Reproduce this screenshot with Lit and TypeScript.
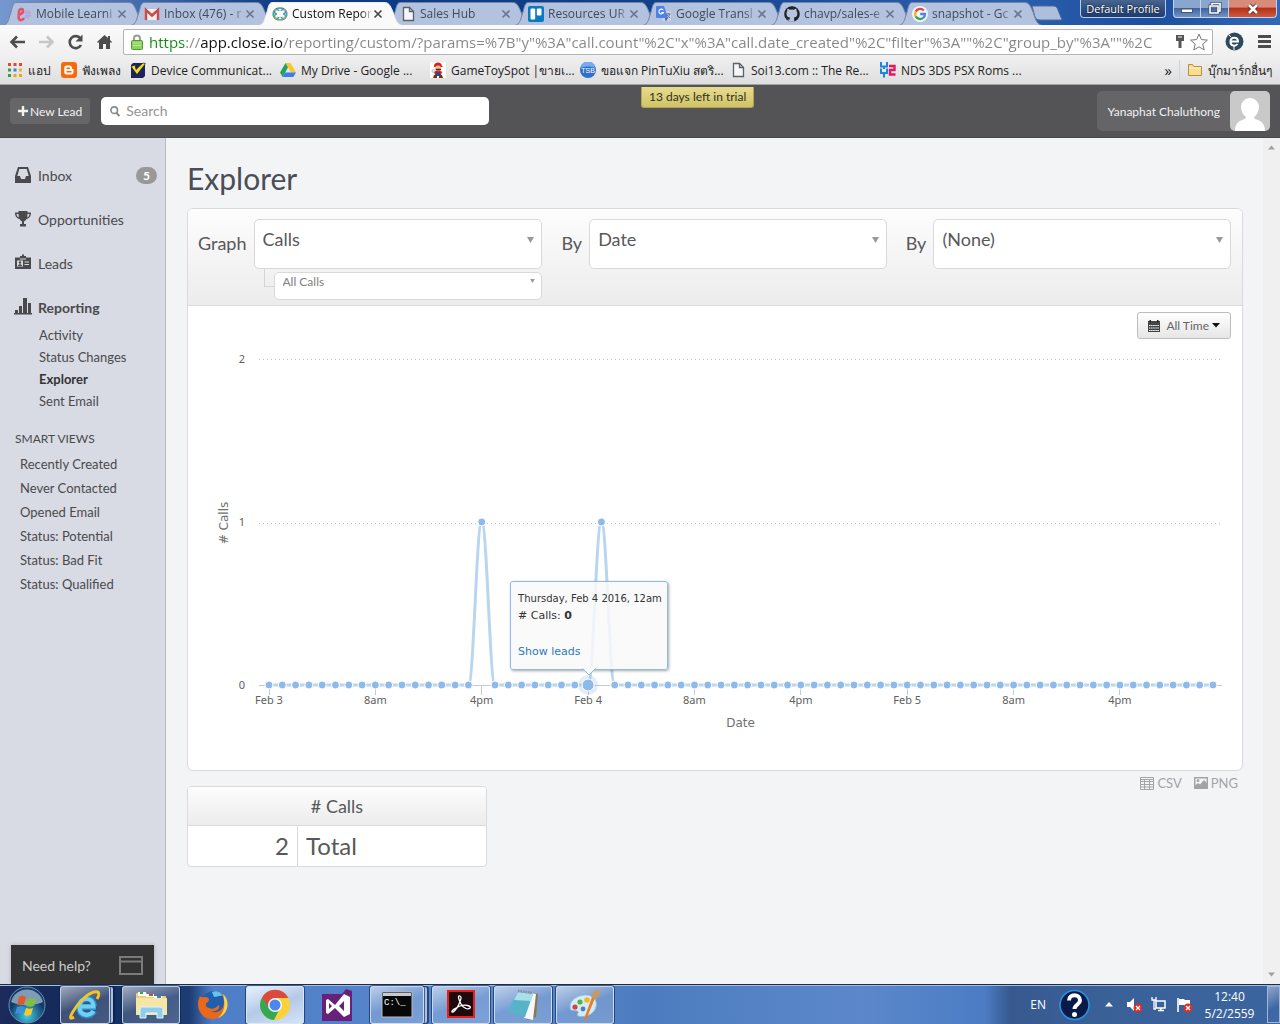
import { LitElement, html, svg, css, nothing } from "lit";
import { customElement, property, state } from "lit/decorators.js";
import { classMap } from "lit/directives/class-map.js";

const pageIcon = svg`<path d="M3.5 1.5h6l4 4v9h-10z" fill="#f4f6fa" stroke="#5a5f68" stroke-width="1.3"/><path d="M9.5 1.5v4h4" fill="none" stroke="#5a5f68" stroke-width="1.3"/>`;

const tabIcons: Record<string, unknown> = {
  learn: svg`<path d="M2 8.500c3 0 5-1.500 5-4S3 2.500 3 6c0 3-1 5 0 7s4 1 5-1" fill="none" stroke="#e2546c" stroke-width="2.600"/><path d="M8.500 7c1-3 6-2 5.500 0H9m0 2.500h5c-1 2-4 2.500-5.500 1" fill="none" stroke="#b9a3dc" stroke-width="1.500"/>`,
  gmail: svg`<rect x="1" y="3" width="14" height="11" fill="#eceef2"/><path d="M2 14V4l6 5.500 6-5.500v10" fill="none" stroke="#c94a46" stroke-width="2.400"/>`,
  close: svg`<g fill="none" stroke-width="1.600"><ellipse cx="8" cy="5.500" rx="5.500" ry="3.500" stroke="#3f88bd"/><ellipse cx="8" cy="10.500" rx="5.500" ry="3.500" stroke="#58ab76"/><ellipse cx="4.500" cy="8" rx="3.300" ry="4.500" stroke="#3da3a7"/><ellipse cx="11.500" cy="8" rx="3.300" ry="4.500" stroke="#4f9fca"/></g><circle cx="8" cy="8" r="3.200" fill="#fff"/><g fill="#d8a33e"><circle cx="3.500" cy="3.800" r="1.100"/><circle cx="12.500" cy="3.800" r="1.100"/><circle cx="3.500" cy="12.200" r="1.100"/><circle cx="12.500" cy="12.200" r="1.100"/></g>`,
  page: pageIcon,
  trello: svg`<rect width="16" height="16" rx="2" fill="#0b79bf"/><rect x="2.500" y="2.500" width="4.700" height="11" rx="1" fill="#fff"/><rect x="8.800" y="2.500" width="4.700" height="7" rx="1" fill="#fff"/>`,
  translate: svg`<rect x="6" y="5" width="9" height="10.500" rx="1" fill="#c9d0de"/><path d="M1 0h7l4 12H1a1 1 0 0 1-1-1V1a1 1 0 0 1 1-1z" fill="#4c82e6"/><path d="M7.300 4.200a2.400 2.400 0 1 0 .2 2.300H5.300" fill="none" stroke="#fff" stroke-width="1.100"/><path d="M9 12h3l-2.300 3.500z" fill="#3a61b8"/><path d="M10 8h4.500M12.200 7v1m1.500 0c-.5 2-1.500 3-2.700 4m0-3 3 3" stroke="#69758e" fill="none"/>`,
  github: svg`<circle cx="8" cy="8" r="7.800" fill="#1d222b"/><path d="M5.800 15.700v-2.100c-2.700.4-2.700-1.500-3.700-1.700M10.200 15.700v-2.600c0-.8-.2-1.200-.6-1.500 2-.3 3.700-1.100 3.700-4.200 0-.9-.3-1.700-.9-2.300.1-.3.400-1.200-.1-2.300 0 0-.8-.2-2.400.9a8 8 0 0 0-4 0C4.300 2.600 3.500 2.800 3.500 2.800c-.5 1.100-.2 2-.1 2.300-.6.600-.9 1.400-.9 2.300 0 3.100 1.700 3.900 3.700 4.200-.3.300-.5.700-.5 1.300v2.800z" fill="#b6c4dd"/>`,
  google: svg`<circle cx="8" cy="8" r="8" fill="#f2f5fa"/><g fill="none" stroke-width="2.300"><path d="M11.800 4.500A5 5 0 0 0 3.700 5.600" stroke="#e2493b"/><path d="M3.700 5.600a5 5 0 0 0 0 4.800" stroke="#f4b713"/><path d="M3.700 10.400a5 5 0 0 0 7.500 1.500" stroke="#36a457"/><path d="M11.200 11.900A5 5 0 0 0 13 8H8.200" stroke="#4a83ea"/></g>`,
};

const bookmarkIcons: Record<string, unknown> = {
  apps: svg`<g><path d="M1 1h3v3H1zM6.500 1h3v3h-3zM12 1h3v3h-3z" fill="#e8443a"/><path d="M1 6.500h3v3H1z" fill="#35a14f"/><path d="M6.500 6.500h3v3h-3z" fill="#3f7de0"/><path d="M12 6.500h3v3h-3z" fill="#f0b51e"/><path d="M1 12h3v3H1z" fill="#35a14f"/><path d="M6.500 12h3v3h-3zM12 12h3v3h-3z" fill="#f0a51e"/></g>`,
  blogger: svg`<rect width="16" height="16" rx="3" fill="#f66a0a"/><path d="M5.500 3.500h3a2.300 2.300 0 0 1 2.300 2.300c0 1 .3 1.200 1.700 1.400v2.800a2.500 2.500 0 0 1-2.500 2.500H5.800a2.500 2.500 0 0 1-2.500-2.500V5.800a2.300 2.300 0 0 1 2.200-2.300z" fill="#fff"/><path d="M6 6.300h2.500M6 9.700h4" stroke="#f66a0a" stroke-width="1.400" stroke-linecap="round"/>`,
  device: svg`<path d="M1 3l2-2h12v13l-2 2H1z" fill="#20215f"/><path d="M1 4.500l4-1.500 1 4.500L13 1l2.500.5L7 12.500z" fill="#f2e21b" stroke="#1a1a40" stroke-width=".6"/>`,
  drive: svg`<path d="M5.500 1h5L16 10.500h-5z" fill="#fbc62d"/><path d="M5.500 1L0 10.500 2.600 15 8 5.400z" fill="#1fa463"/><path d="M5.300 10.500H16L13.400 15H2.600z" fill="#3d7de6"/>`,
  mario: svg`<rect width="16" height="16" fill="#fff"/><path d="M4 4c0-4 7-5 8 0l1 1H4z" fill="#d9201e"/><circle cx="8" cy="6.500" r="3" fill="#f3bd8e"/><path d="M6 7.500h5" stroke="#4c2410" stroke-width="1.400"/><path d="M4 10c2-2 6-2 8 0l-1 3H5z" fill="#d9201e"/><path d="M6 10h4v4H6z" fill="#27469c"/><path d="M4 13h3v3H3zM9 13h3l1 3H9z" fill="#6b3517"/><circle cx="3.500" cy="9" r="1.500" fill="#e9e9e9" stroke="#888" stroke-width=".4"/>`,
  tsb: svg`<circle cx="8" cy="8" r="8" fill="#2d6fca"/><path d="M1 6a7 7 0 0 1 14 0c-4-2-10-2-14 0z" fill="#76abee"/><text x="8" y="11" text-anchor="middle" font-family="Liberation Sans, sans-serif" font-size="7" fill="#fff">TSB</text>`,
  page: pageIcon,
  h2: svg`<path d="M1 0v4.500h6V0M4 4.500V7M1 6.500V11h6V6.500M4 11v4.500" fill="none" stroke="#1d86dd" stroke-width="2"/><path d="M9 4h5.500v4H10v4.500h5.500" fill="none" stroke="#e01767" stroke-width="2.400"/>`,
};

interface TabInfo { title: string; icon: string; active?: boolean; }

const TABS: TabInfo[] = [
  { title: "Mobile Learni", icon: "learn" },
  { title: "Inbox (476) - r", icon: "gmail" },
  { title: "Custom Repor", icon: "close", active: true },
  { title: "Sales Hub", icon: "page" },
  { title: "Resources UR", icon: "trello" },
  { title: "Google Transl", icon: "translate" },
  { title: "chavp/sales-e", icon: "github" },
  { title: "snapshot - Gc", icon: "google" },
];

const BOOKMARKS = [
  { title: "แอป", icon: "apps", size: "tiny" },
  { title: "ฟังเพลง", icon: "blogger", size: "small" },
  { title: "Device Communicat...", icon: "device", size: "" },
  { title: "My Drive - Google ...", icon: "drive", size: "" },
  { title: "GameToySpot |ขายเ...", icon: "mario", size: "" },
  { title: "ขอแจก PinTuXiu สตริ...", icon: "tsb", size: "" },
  { title: "Soi13.com :: The Re...", icon: "page", size: "" },
  { title: "NDS 3DS PSX Roms ...", icon: "h2", size: "" },
];

@customElement("browser-frame")
export class BrowserFrame extends LitElement {
  static styles = css`
    :host { display: block; font-family: "Open Sans", "Noto Sans", sans-serif; font-size: 12px; color: #222; }
    button { font: inherit; color: inherit; border: 0; padding: 0; background: none; }
    svg { display: block; flex: none; }
    .strip { display: flex; height: 25px; padding-left: 2px; background: linear-gradient(90deg, #7598cf 0, #476fb2 10%, #0d3a82 22%, #123f8a 50%, #2c61af 78%, #1c4f9e 90%, #3169b8 100%); }
    .tab { position: relative; flex: 0 1 128px; min-width: 0; height: 25px; display: flex; align-items: center; box-sizing: border-box; padding: 2px 3px 0 14px; color: #3f4a5c; }
    .shape { position: absolute; left: 1px; top: 0; width: 143px; height: 25px; }
    .shape path { fill: #b3c2de; stroke: #7286ab; }
    .tab.active { z-index: 1; color: #111; }
    .tab.active .shape path { fill: #fafafa; stroke: #e8ecf4; }
    .tab .icon, .tab button { position: relative; }
    .name { flex: 1; min-width: 0; margin-left: 4px; overflow: hidden; white-space: nowrap; text-align: left; -webkit-mask-image: linear-gradient(90deg, #000 85%, transparent); mask-image: linear-gradient(90deg, #000 85%, transparent); }
    .newtab { margin: 5px 0 0 5px; align-self: flex-start; }
    .caption { margin-left: auto; display: flex; align-items: flex-start; padding-right: 3px; color: #fff; }
    .profile { height: 18px; width: 86px; margin-right: 7px; border: 1px solid #b9cbea; border-top: 0; border-radius: 0 0 4px 4px; background: linear-gradient(#47658f, #1d3c72); font-size: 11px; line-height: 16px; text-shadow: 0 0 2px #000; white-space: nowrap; }
    .win { height: 18px; width: 28px; display: grid; place-items: center; border: 1px solid #c3d2ea; border-top: 0; background: linear-gradient(#8aa6cf 45%, #41669f 50%, #6d93c8); }
    .win + .win { border-left: 0; }
    .min { border-bottom-left-radius: 4px; }
    .shut { width: 48px; border-bottom-right-radius: 4px; background: linear-gradient(#d98b79 40%, #b6311d 50%, #cf5a3f); }
    .bar { display: flex; align-items: center; height: 33px; background: linear-gradient(#fafafa, #efefef); padding: 0 8px 0 9px; gap: 12px; }
    .nav { display: flex; gap: 12px; }
    .omni { flex: 1; min-width: 0; height: 26px; box-sizing: border-box; display: flex; align-items: center; gap: 5px; margin-left: -2px; padding: 0 4px 0 6px; background: #fff; border: 1px solid #b4b4b4; border-radius: 2px; }
    .url { flex: 1; min-width: 0; border: 0; outline: 0; padding: 0; height: 24px; font: 15px "Open Sans", "Noto Sans", sans-serif; color: transparent; background: linear-gradient(90deg, #128a12 37px, #8a8a8a 37px 52px, #111 52px 134px, #868686 134px); -webkit-background-clip: text; background-clip: text; }
    .marks { display: flex; align-items: center; height: 24px; padding: 0 8px 2px 7px; background: linear-gradient(#efefef, #dedede); border-bottom: 1px solid #a3a3a3; }
    .mark { width: 150px; flex: 0 1 auto; min-width: 0; box-sizing: border-box; display: flex; align-items: center; gap: 5px; color: #222; text-decoration: none; white-space: nowrap; }
    .mark.tiny { width: 54px; }
    .mark.small { width: 69px; }
    .more { margin-left: auto; font-size: 15px; line-height: 16px; }
    .rule { width: 1px; height: 20px; background: #c9d4e4; margin: 0 7px; }
    .mark.folder { width: auto; flex: none; }
  `;

  render() {
    return html`
      <div class="strip">
        ${TABS.map((t) => html`
          <div class=${classMap({ tab: true, active: !!t.active })}>
            <svg class="shape" viewBox="0 0 143 25"><path d="M0 25.500C5 24 5 21 8 12C10 5 10 2.500 14 2.500H125C130 2.500 131 5 134 12C137 21 138 24 143 25.500"/></svg>
            <svg class="icon" width="16" height="16" viewBox="0 0 16 16">${tabIcons[t.icon]}</svg>
            <button class="name">${t.title}</button>
            <button aria-label="Close tab"><svg width="10" height="10" viewBox="0 0 10 10"><path d="M1.500 1.500l7 7m0-7l-7 7" stroke=${t.active ? "#444" : "#68758c"} stroke-width="1.600"/></svg></button>
          </div>`)}
        <button class="newtab" aria-label="New tab"><svg width="32" height="16" viewBox="0 0 32 16"><path d="M1 1h21c3 0 4 1 5 4l4 10H9c-3 0-4-1-5-3z" fill="#aebfdc" stroke="#4f6b9d"/></svg></button>
        <div class="caption">
          <button class="profile">Default Profile</button>
          <button class="win min" aria-label="Minimize"><svg width="14" height="10" viewBox="0 0 14 10"><rect x="1.500" y="5" width="11" height="3.500" fill="#fff" stroke="#47556d"/></svg></button>
          <button class="win" aria-label="Restore"><svg width="14" height="13" viewBox="0 0 14 13"><path d="M4 3V1.500h8V9h-2M2 4h8v7H2z" fill="none" stroke="#3c4a64" stroke-width="3"/><path d="M4 3V1.500h8V9h-2M2 4h8v7H2z" fill="none" stroke="#fff" stroke-width="1.600"/></svg></button>
          <button class="win shut" aria-label="Close"><svg width="14" height="12" viewBox="0 0 14 12"><path d="M3 2l8 8m0-8l-8 8" stroke="#5f2a22" stroke-width="4.400"/><path d="M3 2l8 8m0-8l-8 8" stroke="#fff" stroke-width="2.600"/></svg></button>
        </div>
      </div>
      <div class="bar">
        <div class="nav">
          <button aria-label="Back"><svg width="17" height="18" viewBox="0 0 17 18"><path d="M16 9H3M8 3.500L2.500 9 8 14.500" fill="none" stroke="#4d4d4d" stroke-width="2.600"/></svg></button>
          <button aria-label="Forward"><svg width="17" height="18" viewBox="0 0 17 18"><path d="M1 9h13M9 3.500L14.500 9 9 14.500" fill="none" stroke="#c6c6c6" stroke-width="2.600"/></svg></button>
          <button aria-label="Reload"><svg width="17" height="18" viewBox="0 0 17 18"><path d="M13.500 5.500A6 6 0 1 0 14 12" fill="none" stroke="#4d4d4d" stroke-width="2.600"/><path d="M15.500 1.500v7h-7z" fill="#4d4d4d"/></svg></button>
          <button aria-label="Home"><svg width="17" height="18" viewBox="0 0 17 18"><path d="M8.500 2L1 9l1 1 1-1v7h4v-5h3v5h4V9l1 1 1-1-2-2V3h-2v2z" fill="#4d4d4d"/></svg></button>
        </div>
        <div class="omni">
          <svg width="14" height="18" viewBox="0 0 14 18"><path d="M4 8V5.500a3 3 0 0 1 6 0V8" fill="none" stroke="#9b9b9b" stroke-width="2"/><rect x="1.500" y="7.500" width="11" height="9" rx="1" fill="#8ed35f" stroke="#4f9a35"/><path d="M3 10h8M3 12.500h8" stroke="#b8eb95"/></svg>
          <input class="url" aria-label="Address" .value=${'https://app.close.io/reporting/custom/?params=%7B"y"%3A"call.count"%2C"x"%3A"call.date_created"%2C"filter"%3A""%2C"group_by"%3A""%2C'}>
          <svg width="10" height="16" viewBox="0 0 10 16"><path d="M1 1h8v6H6.500v7h-3V7H1z" fill="#555"/><path d="M3 3h4" stroke="#fff"/></svg>
          <svg width="18" height="18" viewBox="0 0 18 18"><path d="M9 1l2.400 5.600 6 .5-4.600 4 1.400 5.900L9 13.800 3.800 17l1.400-5.900-4.600-4 6-.5z" fill="#fff" stroke="#777"/></svg>
        </div>
        <svg width="19" height="19" viewBox="0 0 19 19"><circle cx="9.500" cy="9.500" r="9" fill="#2d4a5c"/><path d="M6 9.500h7c0-5-7.500-5-7.500 0s5 5 7 2.500" fill="none" stroke="#fff" stroke-width="2"/><path d="M9 14v4M4 3l2 2" stroke="#fff"/></svg>
        <button aria-label="Menu"><svg width="16" height="15" viewBox="0 0 16 15"><path d="M2 2.500h13M2 7.500h13M2 12.500h13" stroke="#4d4d4d" stroke-width="3"/></svg></button>
      </div>
      <div class="marks">
        ${BOOKMARKS.map((b) => html`<a class="mark ${b.size}" href="#"><svg width="16" height="16" viewBox="0 0 16 16">${bookmarkIcons[b.icon]}</svg>${b.title}</a>`)}
        <button class="more" aria-label="More bookmarks">»</button>
        <span class="rule"></span>
        <a class="mark folder" href="#"><svg width="16" height="16" viewBox="0 0 16 16"><path d="M1.500 13.500v-11h4l1.500 2h7.500v9z" fill="#f8dd92" stroke="#b98f3c"/><path d="M2 6h12" stroke="#fff3c9"/></svg>บุ๊กมาร์กอื่นๆ</a>
      </div>`;
  }
}

const HOURS = 72;
const PEAKS = new Set([16, 25]);
const HOVERED = 24;
const X_TICKS = ["Feb 3", "8am", "4pm", "Feb 4", "8am", "4pm", "Feb 5", "8am", "4pm"];

@customElement("calls-chart")
export class CallsChart extends LitElement {
  static styles = css`
    :host { display: block; position: relative; height: 430px; margin-top: 1px; font-family: "Noto Sans", sans-serif; }
    svg { display: block; width: 100%; height: 100%; }
    .grid { stroke: #c4c4c4; stroke-dasharray: 1 3; }
    .axis { stroke: #c0cbd9; }
    .line { fill: none; stroke: #b9d5f0; stroke-width: 3; }
    .dot { fill: #8fb9e8; stroke: #fff; stroke-width: 1; }
    .halo { fill: #8fb9e8; opacity: 0.25; }
    .tick { font-size: 11px; fill: #606060; }
    .title { font-family: "DejaVu Sans", sans-serif; font-size: 12px; fill: #707070; }
    .tip { position: absolute; top: 241px; width: 158px; height: 89px; margin-left: -78px; box-sizing: border-box; padding: 9px 7px; border: 1px solid #8fb9e8; border-radius: 3px; background: rgba(249, 249, 249, 0.85); box-shadow: 1px 1px 3px rgba(0, 0, 0, 0.35); font-family: "DejaVu Sans", sans-serif; font-size: 11px; line-height: 18px; color: #333; white-space: nowrap; }
    .tip p { margin: 0; }
    .tip .when { font-size: 10px; line-height: 16px; }
    .tip a { display: block; margin-top: 18px; color: #2a7ab8; text-decoration: none; }
    .arrow { position: absolute; left: 70px; bottom: -8px; width: 16px; height: 9px; }
  `;

  @state() private width = 1054;
  private observer?: ResizeObserver;

  connectedCallback() {
    super.connectedCallback();
    this.observer = new ResizeObserver(() => { this.width = this.clientWidth || this.width; });
    this.observer.observe(this);
  }

  disconnectedCallback() {
    this.observer?.disconnect();
    super.disconnectedCallback();
  }

  render() {
    const left = 71;
    const right = this.width - 20;
    const step = (right - left - 19) / (HOURS - 1);
    const x = (i: number) => left + 10 + i * step;
    const y = (i: number) => (PEAKS.has(i) ? 182 : 345);
    const hours = Array.from({ length: HOURS }, (_, i) => i);
    const path = hours.map((i) => i === 0
      ? `M${x(0)} ${y(0)}`
      : `C${x(i - 1) + step * 0.4} ${y(i - 1)} ${x(i) - step * 0.4} ${y(i)} ${x(i)} ${y(i)}`).join("");
    return html`
      <svg role="img" aria-label="Calls by date">
        ${[19.5, 183.5].map((gy) => svg`<line class="grid" x1=${left} x2=${right} y1=${gy} y2=${gy}/>`)}
        <line class="axis" x1=${left} x2=${right} y1="345.500" y2="345.500"/>
        ${X_TICKS.map((label, n) => svg`
          <line class="axis" x1=${Math.floor(x(n * 8)) + 0.5} x2=${Math.floor(x(n * 8)) + 0.5} y1="345" y2="355"/>
          <text class="tick" x=${x(n * 8)} y="364" text-anchor="middle">${label}</text>`)}
        ${["0", "1", "2"].map((label, n) => svg`<text class="tick" x=${left - 14} y=${349 - n * 163} text-anchor="end">${label}</text>`)}
        <text class="title" x=${(left + right) / 2} y="387" text-anchor="middle">Date</text>
        <text class="title" transform="translate(40 183) rotate(-90)" text-anchor="middle"># Calls</text>
        <path class="line" d=${path}/>
        <circle class="halo" cx=${x(HOVERED)} cy="345" r="10"/>
        ${hours.map((i) => svg`<circle class="dot" cx=${x(i)} cy=${y(i)} r=${i === HOVERED ? 6 : 4}/>`)}
      </svg>
      <div class="tip" style="left:${x(HOVERED)}px">
        <p class="when">Thursday, Feb 4 2016, 12am</p>
        <p># Calls: <b>0</b></p>
        <a href="#">Show leads</a>
        <svg class="arrow" viewBox="0 0 16 9"><path d="M1 0h14L8 7z" fill="#f8f9fa"/><path d="M1.500 .500L8 7l6.500-6.500" fill="none" stroke="#8fb9e8"/></svg>
      </div>`;
  }
}

const TASKS = [
  { label: "Internet Explorer", look: "open stacked slim", art: svg`<path d="M27 18H10.500c0-11 14-11 14.500-1M10 18c0 10 12 11 15 4" fill="none" stroke="#2b8fc9" stroke-width="6"/><path d="M26.500 17.500H10.500c0-10 14-10 14 0M10.500 18c0 9 11 10 14 4" fill="none" stroke="#6fd0f5" stroke-width="4.200"/><path d="M5 28C-4 34 6 17 15 9S34 0 28 10" fill="none" stroke="#f3c623" stroke-width="2.800"/>` },
  { label: "Explorer", look: "open", art: svg`<path d="M1 4h10l2 3h18v19H1z" fill="#e9cf79"/><path d="M3 3h8v4H3zM11 5h8v3h-8zM19 7h8v3h-8z" fill="#fff"/><path d="M5 3h3v2H5z" fill="#3aa640"/><path d="M14 5h4v2h-4z" fill="#d84a34"/><path d="M22 7h4v2h-4z" fill="#3d7ed6"/><path d="M1 9h31v17H1z" fill="#f6e6a4"/><path d="M5 29V21c0-2 1-3 3-3h17c2 0 3 1 3 3v8h-6v-5H11v5z" fill="#8fcdec" stroke="#dff4ff"/>` },
  { label: "Firefox", look: "", art: svg`<circle cx="17" cy="15" r="13" fill="#205fae"/><path d="M15 3c5-2 10 1 11 4-4-1-6 1-9 1z" fill="#67c3ee"/><path d="M3 7c1 2 3 1 5 1 4 0 5 3 3 5-3 1-3 5 1 6 5 2 7-1 10-3 2 4-4 8-9 6 8 4 14-2 14-9 0-4-2-7-3-9 8 5 8 25-8 26C6 31 1 22 1 15c0-3 1-6 2-8z" fill="#e8691b"/><path d="M26 5c8 7 5 21-5 24 6-5 8-12 5-24z" fill="#fbd544"/>` },
  { label: "Chrome", look: "open current", art: svg`<circle cx="16" cy="16" r="15" fill="#fbd23c"/><path d="M3 8.500A15 15 0 0 0 15 31l6-12-5-3z" fill="#35a853"/><path d="M3 8.500L10 19l6-3V9h13.500A15 15 0 0 0 3 8.500z" fill="#dc4a3d"/><circle cx="16" cy="16" r="7" fill="#f5f8fb"/><circle cx="16" cy="16" r="5.500" fill="#4a88ee"/>` },
  { label: "Visual Studio", look: "", art: svg`<path d="M1 5h20l4-5 6 2v30H1z" fill="#68217a"/><path d="M5 11l2-1 7 6 9-11 6 3v17l-6 3-9-9-7 6-2-1zM8 14v6l3-3zM23 12l-5 5 5 5z" fill="#fff" fill-rule="evenodd"/>` },
  { label: "Command Prompt", look: "open stacked", art: svg`<rect x="1" y="3" width="30" height="25" fill="#080808" stroke="#b8bcc2"/><rect x="2" y="4" width="28" height="3" fill="#c7cbd0"/><text x="3" y="16" font-family="Liberation Mono, monospace" font-size="9" fill="#fff">C:\\_</text>` },
  { label: "Acrobat Reader", look: "open", art: svg`<rect x="3" y="2" width="26" height="26" fill="#1d0a0c" stroke="#ef1c12" stroke-width="2"/><path d="M15 7c-3-1-1 4 1 8s7 6 9 4-5-4-10-2-9 5-8 6 5-3 7-8 3-7 1-8z" fill="none" stroke="#fff" stroke-width="1.300"/>` },
  { label: "Notepad", look: "open", art: svg`<path d="M25 4l6 1-2 23-9 3z" fill="#8d774c"/><path d="M24 4l5 1-3 26-9-2z" fill="#f5f7f8"/><path d="M11 3l15 2-8 23L0 23z" fill="#58b3c8"/><path d="M11 3l15 2-2 7L7 11z" fill="#a9dfe7"/><path d="M11 2l15 2" stroke="#86909a" stroke-width="2.500" stroke-dasharray="1.500 1"/>` },
  { label: "Paint", look: "open", art: svg`<path d="M15 6c9-1 14 5 12 12-2 8-12 11-18 9-2-2 2-4-1-5s-7 1-7-4C1 11 7 7 15 6z" fill="#d5ebf7" stroke="#86bedd"/><circle cx="6" cy="18" r="2.600" fill="#d8413a"/><circle cx="11" cy="13" r="2.600" fill="#52b43e"/><circle cx="18" cy="11" r="2.800" fill="#f2b62b"/><circle cx="14" cy="20" r="2.400" fill="#4a7fc4"/><path d="M26 9l-9 22-2-1L23 8z" fill="#ea7e21"/><path d="M22 8c1-5 5-8 9-7 1 4-1 7-5 9z" fill="#c39a6c"/>` },
];

@customElement("task-bar")
export class TaskBar extends LitElement {
  static styles = css`
    :host { display: flex; height: 39px; border-top: 1px solid #1d2c4a; box-shadow: inset 0 1px #a4bce0; background: linear-gradient(90deg, #1c2a5c 0, #112b5a 90px, #1d3d74 190px, #4d7ec6 212px, #5a88cc 500px, #4c7cbf 650px, #5c88cb 860px, #4b7cc4 985px, #37598f 1010px, #3a6098 1100px, #3b659f 100%); align-items: center; color: #fff; font: 12px "Open Sans", "Noto Sans", sans-serif; }
    button { font: inherit; color: inherit; border: 0; padding: 0; background: none; }
    svg { display: block; }
    .orb { margin: 0 14px 0 8px; }
    .tasks { display: flex; gap: 4px; }
    .task { width: 58px; height: 38px; box-sizing: border-box; display: grid; place-items: center; border-radius: 3px; }
    .open { border: 1px solid rgba(220, 232, 250, 0.8); background: linear-gradient(160deg, rgba(255, 255, 255, 0.6), rgba(255, 255, 255, 0.18) 50%, rgba(255, 255, 255, 0.22)); box-shadow: 0 0 0 1px rgba(10, 30, 70, 0.6); }
    .current { background: linear-gradient(160deg, #e8f1fc, #b4c9e8 50%, #d5e4f6); }
    .stacked { width: 54px; margin-right: 4px; box-shadow: 0 0 0 1px rgba(10, 30, 70, 0.6), 4px 0 0 -1px #a9c0e2, 5px 0 0 0 rgba(10, 30, 70, 0.6); }
    .slim { width: 50px; margin-right: 8px; }
    .tray { margin-left: auto; display: flex; align-items: center; }
    .lang { margin-right: 13px; }
    .help { margin-right: 15px; }
    .icons { display: flex; gap: 9px; margin-left: 13px; }
    .clock { width: 75px; text-align: center; line-height: 17px; }
    .desk { width: 13px; height: 37px; box-sizing: border-box; border: 1px solid #9fb6d8; background: linear-gradient(150deg, #8ea5c8, #3f67a4 60%); }
  `;

  render() {
    const bad = svg`<circle cx="12" cy="12" r="4.500" fill="#dc2d20"/><path d="M10 10l4 4m0-4l-4 4" stroke="#fff" stroke-width="1.300"/>`;
    return html`
      <button class="orb" aria-label="Start"><svg width="38" height="38" viewBox="0 0 38 38">
        <defs><radialGradient id="deep" cy=".8"><stop offset="0" stop-color="#3fd0e8"/><stop offset="1" stop-color="#123c66"/></radialGradient></defs>
        <circle cx="19" cy="19" r="18" fill="url(#deep)" stroke="#6d8fb5"/><path d="M3 16a16.500 16.500 0 0 1 32 0c-8 4-24 4-32 0z" fill="#b9cfe0" opacity=".65"/>
        <path d="M11 11c3-2 5-1 7 0l-2 8c-2-1-4-1-7 0z" fill="#e8572b"/><path d="M20 12c3 1 5 1 8 0l-2 8c-3 1-5 1-8 0z" fill="#7fbf3a"/><path d="M9 21c3-1 5-1 7 0l-2 7c-2-1-4-1-7 0z" fill="#3d90de"/><path d="M18 22c3 1 5 1 7 0l-2 7c-3 1-5 1-7 0z" fill="#f7c92d"/>
      </svg></button>
      <div class="tasks">
        ${TASKS.map((t) => html`<button class="task ${t.look}" aria-label=${t.label}><svg width="32" height="32" viewBox="0 0 32 32">${t.art}</svg></button>`)}
      </div>
      <div class="tray">
        <span class="lang">EN</span>
        <button class="help" aria-label="Help"><svg width="31" height="32" viewBox="0 0 31 32"><circle cx="15.500" cy="16" r="14.500" fill="#0a1a48" stroke="#2795e0" stroke-width="1.600"/><path d="M10 11.500c0-7 11-7 11 0 0 4-5.500 4-5.500 8.500" fill="none" stroke="#fff" stroke-width="4"/><circle cx="15.500" cy="25.500" r="2.500" fill="#fff"/></svg></button>
        <button aria-label="Show hidden icons"><svg width="8" height="5" viewBox="0 0 8 5"><path d="M0 4.500L4 0l4 4.500z" fill="#fff"/></svg></button>
        <div class="icons">
          <svg width="16" height="18" viewBox="0 0 16 18"><path d="M1 6h3l4-4v13l-4-4H1z" fill="#fff"/>${bad}</svg>
          <svg width="16" height="18" viewBox="0 0 16 18"><path d="M5 5h9v7H5zM7 14.500h6M10 12v2" fill="none" stroke="#fff" stroke-width="1.500"/><path d="M1 1v3h4V1M3 4v9h2" fill="none" stroke="#fff" stroke-width="1.300"/></svg>
          <svg width="16" height="18" viewBox="0 0 16 18"><path d="M2 2v14" stroke="#fff" stroke-width="1.600"/><path d="M3 3h5l1 1h5v6H9L8 9H3z" fill="#fff"/>${bad}</svg>
        </div>
        <div class="clock">12:40<br>5/2/2559</div>
        <button class="desk" aria-label="Show desktop"></button>
      </div>`;
  }
}

const NAV = [
  { label: "Inbox", badge: 5, art: svg`<path d="M4 1h10l3 9v7H1v-7z" fill="#4a4a4c"/><path d="M5.300 3h7.400l2 7H12l-1 3H7l-1-3H3.300z" fill="#d8dae4"/>` },
  { label: "Opportunities", art: svg`<path d="M4.500 1h9v1.500H17c0 4-2 6-4.500 6.500-.7 1.300-1.500 2-2.500 2.500V14h2v2.500H6V14h2v-2.500c-1-.5-1.800-1.200-2.500-2.500C3 8.500 1 6.500 1 2.500h3.500zM2.500 4c.2 1.800 1 3 2.300 3.500L4.500 4zm13 0h-2l-.3 3.500c1.300-.5 2.100-1.700 2.300-3.500z" fill="#4a4a4c"/>` },
  { label: "Leads", art: svg`<path d="M1 3.500h5V2h2V.500h2V2h2v1.500h5V15H1z" fill="#4a4a4c"/><path d="M3 6.500h6v6H3zM10.500 7.500h4.500v1h-4.500zM10.500 10h4.500v1h-4.500zM6 4.500h6v1H6z" fill="#d8dae4"/><circle cx="6" cy="8.500" r="1.200" fill="#4a4a4c"/><path d="M4 12c0-2.500 4-2.500 4 0z" fill="#4a4a4c"/>` },
  { label: "Reporting", current: true, art: svg`<path d="M1 15v-3h3v3h1V8h3v7h1V0h4v15h1V5h3v10h1v1.500H0V15z" fill="#4a4a4c"/>` },
];
const REPORTS = ["Activity", "Status Changes", "Explorer", "Sent Email"];
const VIEWS = ["Recently Created", "Never Contacted", "Opened Email", "Status: Potential", "Status: Bad Fit", "Status: Qualified"];

@customElement("drop-field")
export class DropField extends LitElement {
  static styles = css`
    :host { display: block; position: relative; flex: 1; min-width: 0; }
    select { display: block; width: 100%; height: 50px; box-sizing: border-box; appearance: none; border: 1px solid #d9d9d9; border-radius: 5px; background: #fff; padding: 0 24px 10px 8px; font: 18px Lato, sans-serif; color: #58585a; }
    :host([compact]) select { height: 28px; font-size: 12px; color: #808080; }
    .caret { position: absolute; right: 8px; top: 18px; pointer-events: none; }
    :host([compact]) .caret { right: 7px; top: 7px; width: 5px; height: 4px; }
  `;
  @property() label = "";
  @property() value = "";
  render() {
    return html`<select aria-label=${this.label}><option>${this.value}</option></select>
      <svg class="caret" width="7" height="6" viewBox="0 0 7 6"><path d="M0 0h7L3.500 6z" fill="#999"/></svg>`;
  }
}

@customElement("app-root")
export class AppRoot extends LitElement {
  static styles = css`
    :host { display: flex; flex-direction: column; min-height: 100vh; font-family: Lato, sans-serif; color: #58585a; background: #f3f4f6; }
    a { color: inherit; text-decoration: none; }
    button, input { font: inherit; color: inherit; }
    svg { display: block; flex: none; }
    .top { position: relative; display: flex; align-items: center; gap: 11px; height: 52px; padding: 0 10px; background: #545456; border-bottom: 1px solid #48484a; color: #f2f2f2; }
    .new { display: flex; align-items: center; gap: 2px; height: 26px; padding: 0 8px; border: 0; border-radius: 4px; background: #666668; font-size: 12px; white-space: nowrap; }
    .search { display: flex; align-items: center; gap: 6px; flex: 0 1 388px; min-width: 120px; height: 28px; box-sizing: border-box; padding: 0 9px; border-radius: 5px; background: #fff; color: #777; }
    .search input { flex: 1; min-width: 0; border: 0; outline: 0; padding: 0 0 2px; background: none; font-size: 14px; }
    .search input::placeholder { color: #959595; }
    .trial { position: absolute; left: 50%; top: 2px; height: 21px; box-sizing: border-box; padding: 0 7px; margin-left: 1px; border: 1px solid #b1a652; border-top: 0; border-radius: 0 0 3px 3px; background: linear-gradient(#e6dc8c, #d0c368); color: #333026; font-size: 12px; line-height: 19px; white-space: nowrap; }
    .user { margin-left: auto; display: flex; align-items: center; gap: 10px; height: 40px; padding-left: 11px; border-radius: 5px; background: #656567; font-size: 12px; white-space: nowrap; }
    .body { flex: 1; display: flex; }
    .side { flex: none; width: 165px; display: flex; flex-direction: column; padding-top: 15px; box-sizing: border-box; background: #d8dae4; color: #4a4a4c; }
    .side ul { list-style: none; margin: 0; padding: 0; }
    .item { display: flex; align-items: center; height: 44px; padding: 0 8px 0 14px; gap: 6px; font-size: 14px; }
    .item.current { font-weight: 700; }
    .badge { margin-left: auto; width: 21px; height: 17px; border-radius: 9px; background: #98989a; color: #fff; font-size: 12px; font-weight: 700; line-height: 17px; text-align: center; }
    .side .reports { margin-top: -5px; }
    .reports li { padding-left: 39px; font-size: 13px; line-height: 22px; }
    .reports .current { font-weight: 700; color: #333; }
    .views-title { margin: 18px 0 4px 15px; font-size: 12px; line-height: 18px; font-weight: 400; }
    .views li { padding-left: 20px; font-size: 13px; line-height: 24px; }
    .chat { margin: auto 11px 0; display: flex; align-items: center; justify-content: space-between; height: 39px; padding: 2px 11px 0; box-sizing: border-box; border: 0; background: #333; color: #ccc; font-size: 14px; box-shadow: 0 0 4px rgba(0, 0, 0, 0.2); }
    .main { flex: 1; min-width: 0; padding: 22px 20px 24px 21px; border-left: 1px solid #b7b9c0; }
    h1 { margin: 0 0 12px; font-size: 30px; line-height: 36px; font-weight: 400; color: #4b4d57; }
    .panel { border: 1px solid #dadada; border-radius: 6px; background: #fff; overflow: hidden; }
    .query { display: grid; grid-template-columns: 18fr 17fr 17fr; gap: 19px; padding: 10px 11px 5px 10px; background: linear-gradient(#fdfdfd, #ececec); border-bottom: 1px solid #dadada; font-size: 18px; }
    .group { display: flex; min-width: 0; gap: 7px; }
    .group > .word { line-height: 48px; }
    .stack { flex: 1; min-width: 0; display: flex; flex-direction: column; }
    .sub { display: flex; margin-left: 10px; }
    .elbow { width: 9px; height: 17px; border: solid #d5d5d5; border-width: 0 0 1px 1px; }
    .sub drop-field { margin-top: 3px; }
    .tools { display: flex; justify-content: flex-end; padding: 6px 11px 0; }
    .range { display: flex; align-items: center; gap: 6px; height: 27px; padding: 0 10px; border: 1px solid #bdbdbd; border-radius: 3px; background: linear-gradient(#fff, #e6e6e6); font-size: 12px; color: #666; }
    .range .down { margin-left: -3px; }
    .foot { display: flex; justify-content: space-between; align-items: flex-start; }
    table { width: 300px; margin-top: 15px; border: 1px solid #dadada; border-radius: 4px; border-spacing: 0; background: #fff; overflow: hidden; }
    th { height: 38px; padding: 0; font-size: 18px; font-weight: 400; background: linear-gradient(#fdfdfd, #ececec); border-bottom: 1px solid #dadada; }
    td { height: 40px; padding: 0 8px; font-size: 24px; line-height: 30px; }
    .num { width: 93px; text-align: right; border-right: 1px solid #dadada; }
    .export { display: flex; gap: 12px; padding: 2px 5px 0 0; font-size: 13px; line-height: 20px; color: #a4a4a6; }
    .export a { display: flex; align-items: center; gap: 3px; }
    .scroll { flex: none; width: 17px; display: flex; flex-direction: column; justify-content: space-between; align-items: center; padding: 7px 0; box-sizing: border-box; background: #f0f0f0; }
  `;

  private nav() {
    return html`<nav class="side">
      <ul>${NAV.map((n) => html`<li><a href="#" class=${classMap({ item: true, current: !!n.current })}><svg width="18" height="18" viewBox="0 0 18 18">${n.art}</svg>${n.label}${n.badge ? html`<span class="badge">${n.badge}</span>` : nothing}</a></li>`)}</ul>
      <ul class="reports">${REPORTS.map((r) => html`<li class=${classMap({ current: r === "Explorer" })}><a href="#">${r}</a></li>`)}</ul>
      <h2 class="views-title">SMART VIEWS</h2>
      <ul class="views">${VIEWS.map((v) => html`<li><a href="#">${v}</a></li>`)}</ul>
      <button class="chat">Need help?<svg width="24" height="20" viewBox="0 0 24 20"><path d="M1 1h22v17H1zM1 5.500h22" fill="none" stroke="#7b7b7b" stroke-width="2"/></svg></button>
    </nav>`;
  }

  render() {
    return html`
      <browser-frame></browser-frame>
      <header class="top">
        <button class="new"><svg width="10" height="10" viewBox="0 0 10 10"><path d="M5 0v10M0 5h10" stroke="#f2f2f2" stroke-width="2.400"/></svg>New Lead</button>
        <label class="search"><svg width="10" height="11" viewBox="0 0 10 11"><circle cx="4.200" cy="4.200" r="3.300" fill="none" stroke="#888" stroke-width="1.600"/><path d="M6.500 6.800L9.300 10" stroke="#888" stroke-width="2"/></svg><input type="search" placeholder="Search" aria-label="Search"></label>
        <a class="trial" href="#">13 days left in trial</a>
        <a class="user" href="#">Yanaphat Chaluthong<svg width="40" height="40" viewBox="0 0 40 40"><rect width="40" height="40" rx="5" fill="#c9c9c9"/><path d="M5 40c0-7 3-10 10-12l1-2c-3-2-5-6-5-10 0-5 4-9 9-9s9 4 9 9c0 4-2 8-5 10l1 2c7 2 10 5 10 12z" fill="#fff"/></svg></a>
      </header>
      <div class="body">
        ${this.nav()}
        <main class="main">
          <h1>Explorer</h1>
          <section class="panel">
            <div class="query">
              <div class="group"><span class="word">Graph</span>
                <div class="stack">
                  <drop-field label="Graph" value="Calls"></drop-field>
                  <div class="sub"><span class="elbow"></span><drop-field compact label="Call type" value="All Calls"></drop-field></div>
                </div>
              </div>
              <div class="group"><span class="word">By</span><drop-field label="By" value="Date"></drop-field></div>
              <div class="group"><span class="word">By</span><drop-field label="Then by" value="(None)"></drop-field></div>
            </div>
            <div class="tools"><button class="range"><svg width="12" height="12" viewBox="0 0 12 12"><path d="M0 1h12v11H0z" fill="#444"/><path d="M1.500 0h1.500v2H1.500zM9 0h1.500v2H9z" fill="#222"/><path d="M1 5.500h10M1 8h10M1 10.500h10" stroke="#fff" stroke-dasharray="1.500 .600"/></svg>All Time<svg class="down" width="8" height="5" viewBox="0 0 8 5"><path d="M0 0h8L4 4.500z" fill="#111"/></svg></button></div>
            <calls-chart></calls-chart>
          </section>
          <div class="foot">
            <table>
              <thead><tr><th colspan="2"># Calls</th></tr></thead>
              <tbody><tr><td class="num">2</td><td>Total</td></tr></tbody>
            </table>
            <div class="export">
              <a href="#"><svg width="14" height="13" viewBox="0 0 14 13"><path d="M.500 .500h13v12H.500zM.500 2.500h13M.500 4.500h13M.500 7.500h13M.500 10h13M4.500 3v9M9.500 3v9" fill="none" stroke="#a4a4a6"/></svg>CSV</a>
              <a href="#"><svg width="14" height="12" viewBox="0 0 14 12"><path d="M.700 .700h12.600v10.600H.700z" fill="none" stroke="#a4a4a6" stroke-width="1.400"/><circle cx="4" cy="3.700" r="1.400" fill="#a4a4a6"/><path d="M1 11V8.500l3-2.500 2 1.500L10 3l3 3v5z" fill="#a4a4a6"/></svg>PNG</a>
            </div>
          </div>
        </main>
        <div class="scroll" aria-hidden="true">
          <svg width="7" height="5" viewBox="0 0 7 5"><path d="M0 4.500L3.500 .500 7 4.500z" fill="#a0a0a0"/></svg>
          <svg width="7" height="5" viewBox="0 0 7 5"><path d="M0 .500h7L3.500 4.500z" fill="#a0a0a0"/></svg>
        </div>
      </div>
      <task-bar></task-bar>`;
  }
}
